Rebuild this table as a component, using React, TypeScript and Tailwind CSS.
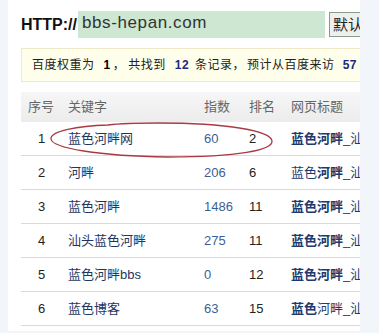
import React from "react";

const rows = [
  { no: 1, kw: "蓝色河畔网", idx: "60", rank: "2", title: [["蓝色河畔", true], ["_汕头蓝色河畔", false]] },
  { no: 2, kw: "河畔", idx: "206", rank: "6", title: [["蓝色", false], ["河畔", true], ["_汕头蓝色河畔", false]] },
  { no: 3, kw: "蓝色河畔", idx: "1486", rank: "11", title: [["蓝色河畔", true], ["_汕头蓝色河畔", false]] },
  { no: 4, kw: "汕头蓝色河畔", idx: "275", rank: "11", title: [["蓝色河畔", true], ["_汕头蓝色河畔", false]] },
  { no: 5, kw: "蓝色河畔bbs", idx: "0", rank: "12", title: [["蓝色河畔", true], ["_汕头蓝色河畔", false]] },
  { no: 6, kw: "蓝色博客", idx: "63", rank: "15", title: [["蓝色", true], ["河畔_汕头蓝色河畔", false]] },
] as { no: number; kw: string; idx: string; rank: string; title: [string, boolean][] }[];

const font = "font-['Liberation_Sans','Noto_Sans_CJK_SC',sans-serif]";
const cols = "grid grid-cols-[40px_136px_45px_42px_200px]";

export default function App() {
  return (
    <div className={`w-[379px] h-[333px] bg-[#f2f6fa] ${font} overflow-hidden`}>
      <div className="relative ml-[8px] w-[352px] h-[331px] bg-white overflow-hidden pl-[13px]">
        {/* url bar */}
        <div className="flex items-center pt-[11px] w-[400px]">
          <span className="text-[16px] font-bold text-[#111] w-[57px] leading-[27px]">HTTP://</span>
          <div className="w-[247px] h-[27px] bg-[#cde7d3] pl-[4px] text-[17px] tracking-[0.6px] leading-[24px] text-[#333]">
            bbs-hepan.com
          </div>
          <button className="ml-[4px] h-[25px] px-[3px] border border-[#8a9a8e] bg-[#eef0ee] text-[15px] leading-[21px] text-[#222]">
            默认值
          </button>
        </div>

        {/* info box */}
        <div className="mt-[10px] w-[400px] h-[34px] bg-[#fffeea] border border-[#efe9c9] pl-[10px] flex items-center text-[12px] tracking-[0.5px] text-[#222] whitespace-nowrap">
          <span>百度权重为</span>
          <b className="ml-[9px] text-black">1</b>
          <span className="ml-[2px]">，</span>
          <span className="ml-[3px]">共找到</span>
          <b className="ml-[9px] text-[#1a2a80]">12</b>
          <span className="ml-[6px]">条记录，</span>
          <span className="ml-[2px]">预计从百度来访</span>
          <b className="ml-[8px] text-[#1a2a80]">57</b>
        </div>

        {/* table */}
        <div className="mt-[10px] w-[463px] text-[13px]">
          <div className={`${cols} h-[30px] items-center bg-gradient-to-b from-[#f6f6f6] to-[#ececec] text-[#666]`}>
            <div className="text-center">序号</div>
            <div className="pl-[7px]">关键字</div>
            <div className="pl-[7px]">指数</div>
            <div className="pl-[7px]">排名</div>
            <div className="pl-[7px]">网页标题</div>
          </div>
          {rows.map((r) => (
            <div
              key={r.no}
              className={`${cols} h-[34px] items-center border-b border-[#dadada] whitespace-nowrap`}
            >
              <div className="text-center text-[#222] pl-[1px]">{r.no}</div>
              <div className="pl-[7px] text-[#1e3560]">{r.kw}</div>
              <div className="pl-[7px] text-[#3b5f94]">{r.idx}</div>
              <div className="pl-[7px] text-[#222]">{r.rank}</div>
              <div className="pl-[7px] text-[#1c3a6e]">
                {r.title.map(([t, b], i) => (
                  <span key={i} className={b ? "font-bold" : ""}>
                    {t}
                  </span>
                ))}
              </div>
            </div>
          ))}
        </div>

        {/* hand-drawn red ellipse */}
        <svg className="absolute left-0 top-0 pointer-events-none" width="352" height="331">
          <path
            d="M 100 125 C 70 126, 42 131, 43 139 C 44 148, 90 156, 160 157 C 230 157, 265 150, 264 141 C 263 131, 220 123, 150 123 C 125 123, 108 124, 100 125"
            fill="none"
            stroke="#a83a44"
            strokeWidth="1.3"
          />
        </svg>
      </div>
    </div>
  );
}
